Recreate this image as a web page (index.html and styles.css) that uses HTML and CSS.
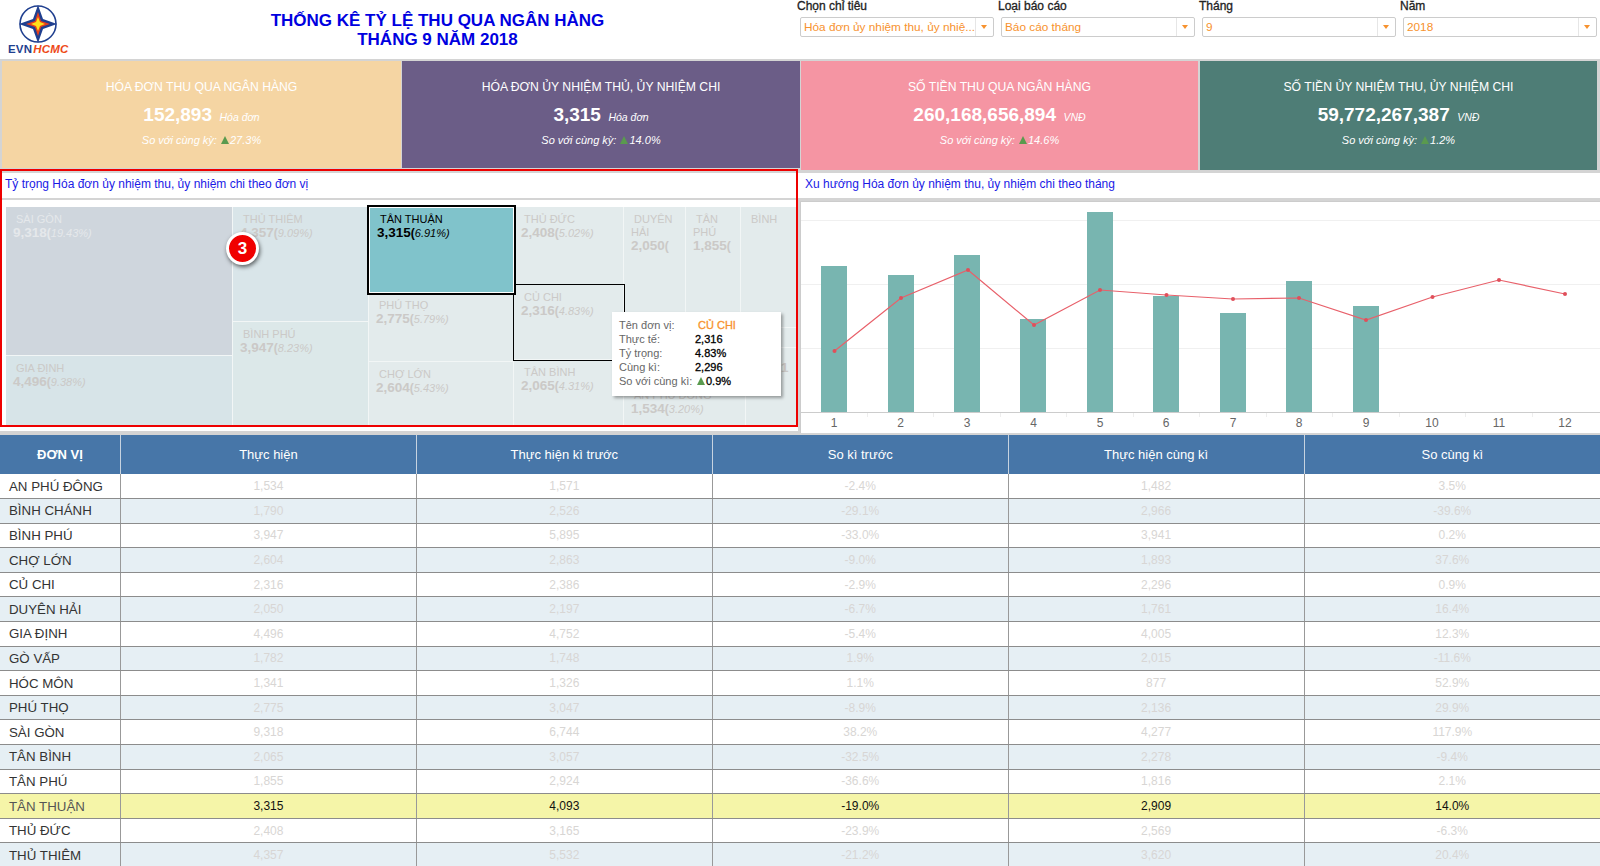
FILE: index.html
```html
<!DOCTYPE html>
<html lang="en">
<head>
  <meta charset="UTF-8">
  <title>Thống kê tỷ lệ thu qua ngân hàng</title>
  <link rel="stylesheet" href="styles.css">
</head>
<body>
  <header class="top">
    <div class="logo">
      <svg width="38" height="38" viewBox="0 0 38 38">
        <circle cx="19" cy="19" r="18" fill="white" stroke="#1f3f8f" stroke-width="1.6"/>
        <path d="M19 0 L24 14 L38 19 L24 24 L19 38 L14 24 L0 19 L14 14 Z" fill="#1f3f8f"/>
        <path d="M19 7 L22 16 L31 19 L22 22 L19 31 L16 22 L7 19 L16 16 Z" fill="#e8401c"/>
        <path d="M19 12 L21 17 L26 19 L21 21 L19 26 L17 21 L12 19 L17 17 Z" fill="#ffe21a"/>
      </svg>
      <div class="logo-text"><span class="evn">EVN</span><span class="hcmc">HCMC</span></div>
    </div>
    <div class="title">THỐNG KÊ TỶ LỆ THU QUA NGÂN HÀNG<br>THÁNG 9 NĂM 2018</div>
    <div class="filters">
      <div class="filter"><label>Chọn chỉ tiêu</label><div class="select"><span>Hóa đơn ủy nhiệm thu, ủy nhiệ...</span><i></i></div></div>
      <div class="filter"><label>Loại báo cáo</label><div class="select"><span>Báo cáo tháng</span><i></i></div></div>
      <div class="filter"><label>Tháng</label><div class="select"><span>9</span><i></i></div></div>
      <div class="filter"><label>Năm</label><div class="select"><span>2018</span><i></i></div></div>
    </div>
  </header>

  <section class="kpis">
    <div class="kpi kpi-sand">
      <div class="kpi-name">HÓA ĐƠN THU QUA NGÂN HÀNG</div>
      <div class="kpi-value"><b>152,893</b> <em>Hóa đơn</em></div>
      <div class="kpi-cmp">So với cùng kỳ: <span class="up"></span>27.3%</div>
    </div>
    <div class="kpi kpi-purple">
      <div class="kpi-name">HÓA ĐƠN ỦY NHIỆM THỦ, ỦY NHIỆM CHI</div>
      <div class="kpi-value"><b>3,315</b> <em>Hóa đơn</em></div>
      <div class="kpi-cmp">So với cùng kỳ: <span class="up"></span>14.0%</div>
    </div>
    <div class="kpi kpi-pink">
      <div class="kpi-name">SỐ TIỀN THU QUA NGÂN HÀNG</div>
      <div class="kpi-value"><b>260,168,656,894</b> <em>VNĐ</em></div>
      <div class="kpi-cmp">So với cùng kỳ: <span class="up"></span>14.6%</div>
    </div>
    <div class="kpi kpi-green">
      <div class="kpi-name">SỐ TIỀN ỦY NHIỆM THU, ỦY NHIỆM CHI</div>
      <div class="kpi-value"><b>59,772,267,387</b> <em>VNĐ</em></div>
      <div class="kpi-cmp">So với cùng kỳ: <span class="up"></span>1.2%</div>
    </div>
  </section>

  <section class="charts">
    <div class="panel panel-left">
      <div class="panel-title">Tỷ trọng Hóa đơn ủy nhiệm thu, ủy nhiệm chi theo đơn vị</div>
      <div class="treemap">
        <div class="tm-col tm-a">
          <div class="cell c-saigon"><p>SÀI GÒN</p><b>9,318</b><u>(</u><em>19.43%)</em></div>
          <div class="cell c-giadinh"><p>GIA ĐỊNH</p><b>4,496</b><u>(</u><em>9.38%)</em></div>
        </div>
        <div class="tm-col tm-b">
          <div class="cell c-thuthiem"><p>THỦ THIÊM</p><b>4,357</b><u>(</u><em>9.09%)</em></div>
          <div class="cell c-binhphu"><p>BÌNH PHÚ</p><b>3,947</b><u>(</u><em>8.23%)</em></div>
        </div>
        <div class="tm-col tm-c">
          <div class="cell c-tanthuan"><p>TÂN THUẬN</p><b>3,315</b><u>(</u><em>6.91%)</em></div>
          <div class="cell c-phutho"><p>PHÚ THỌ</p><b>2,775</b><u>(</u><em>5.79%)</em></div>
          <div class="cell c-cholon"><p>CHỢ LỚN</p><b>2,604</b><u>(</u><em>5.43%)</em></div>
        </div>
        <div class="tm-col tm-d">
          <div class="cell c-thuduc"><p>THỦ ĐỨC</p><b>2,408</b><u>(</u><em>5.02%)</em></div>
          <div class="cell c-cuchi"><p>CỦ CHI</p><b>2,316</b><u>(</u><em>4.83%)</em></div>
          <div class="cell c-tanbinh"><p>TÂN BÌNH</p><b>2,065</b><u>(</u><em>4.31%)</em></div>
        </div>
        <div class="tm-col tm-e">
          <div class="tm-row tm-top">
            <div class="cell c-duyenhai"><p>DUYÊN HẢI</p><b>2,050</b><u>(</u></div>
            <div class="cell c-tanphu"><p>TÂN PHÚ</p><b>1,855</b><u>(</u></div>
            <div class="tm-col tm-f">
              <div class="cell c-binh"><p>BÌNH</p></div>
              <div class="cell c-binh2"></div>
            </div>
          </div>
          <div class="tm-row tm-bottom">
            <div class="tm-col tm-g">
              <div class="cell c-blank"></div>
              <div class="cell c-anphu"><p>AN PHÚ ĐÔNG</p><b>1,534</b><u>(</u><em>3.20%)</em></div>
            </div>
            <div class="cell c-last"><b>1</b></div>
          </div>
        </div>
      </div>
      <div class="badge">3</div>
      <div class="red-frame"></div>
      <div class="tooltip">
        <div class="tip-row"><span>Tên đơn vị:</span><b class="tip-name">CỦ CHI</b></div>
        <div class="tip-row"><span>Thực tế:</span><b>2,316</b></div>
        <div class="tip-row"><span>Tỷ trọng:</span><b>4.83%</b></div>
        <div class="tip-row"><span>Cùng kì:</span><b>2,296</b></div>
        <div class="tip-row tip-last"><span>So với cùng kì:</span><b><i class="up"></i>0.9%</b></div>
      </div>
    </div>
    <div class="panel panel-right">
      <div class="panel-title">Xu hướng Hóa đơn ủy nhiệm thu, ủy nhiệm chi theo tháng</div>
      <div class="chart">
        <svg width="799" height="231" viewBox="801 202 799 231">
          <g stroke="#f0f0f0" stroke-width="1">
            <line x1="801" y1="220.5" x2="1600" y2="220.5"/>
            <line x1="801" y1="284.5" x2="1600" y2="284.5"/>
            <line x1="801" y1="348.5" x2="1600" y2="348.5"/>
          </g>
          <g fill="#78b5b0">
            <rect x="821" y="266" width="26" height="146"/>
            <rect x="888" y="275" width="26" height="137"/>
            <rect x="954" y="255" width="26" height="157"/>
            <rect x="1020" y="319" width="26" height="93"/>
            <rect x="1087" y="212" width="26" height="200"/>
            <rect x="1153" y="296" width="26" height="116"/>
            <rect x="1220" y="313" width="26" height="99"/>
            <rect x="1286" y="281" width="26" height="131"/>
            <rect x="1353" y="306" width="26" height="106"/>
          </g>
          <line x1="801" y1="412.5" x2="1600" y2="412.5" stroke="#ccc"/>
          <g stroke="#eee">
            <line x1="867.5" y1="413" x2="867.5" y2="417"/>
            <line x1="933.5" y1="413" x2="933.5" y2="417"/>
            <line x1="1000.5" y1="413" x2="1000.5" y2="417"/>
            <line x1="1066.5" y1="413" x2="1066.5" y2="417"/>
            <line x1="1133.5" y1="413" x2="1133.5" y2="417"/>
            <line x1="1199.5" y1="413" x2="1199.5" y2="417"/>
            <line x1="1266.5" y1="413" x2="1266.5" y2="417"/>
            <line x1="1332.5" y1="413" x2="1332.5" y2="417"/>
            <line x1="1399.5" y1="413" x2="1399.5" y2="417"/>
            <line x1="1465.5" y1="413" x2="1465.5" y2="417"/>
            <line x1="1532.5" y1="413" x2="1532.5" y2="417"/>
          </g>
          <polyline fill="none" stroke="#e8606a" stroke-width="1.2" points="834.5,351 901,298 968,270 1034,325 1100,290 1166.5,295 1233,299 1299,298 1366,320 1432.5,297 1499,280 1565,294"/>
          <g fill="#e04f5a">
            <circle cx="834.5" cy="351" r="2"/><circle cx="901" cy="298" r="2"/><circle cx="968" cy="270" r="2"/><circle cx="1034" cy="325" r="2"/>
            <circle cx="1100" cy="290" r="2"/><circle cx="1166.5" cy="295" r="2"/><circle cx="1233" cy="299" r="2"/><circle cx="1299" cy="298" r="2"/>
            <circle cx="1366" cy="320" r="2"/><circle cx="1432.5" cy="297" r="2"/><circle cx="1499" cy="280" r="2"/><circle cx="1565" cy="294" r="2"/>
          </g>
          <g class="axis" text-anchor="middle">
            <text x="834" y="427">1</text><text x="900.5" y="427">2</text><text x="967" y="427">3</text><text x="1033.5" y="427">4</text>
            <text x="1100" y="427">5</text><text x="1166" y="427">6</text><text x="1233" y="427">7</text><text x="1299" y="427">8</text>
            <text x="1366" y="427">9</text><text x="1432" y="427">10</text><text x="1499" y="427">11</text><text x="1565" y="427">12</text>
          </g>
        </svg>
      </div>
    </div>
  </section>

  <table class="grid">
    <thead>
      <tr><th class="col-unit">ĐƠN VỊ</th><th>Thực hiện</th><th>Thực hiện kì trước</th><th>So kì trước</th><th>Thực hiện cùng kì</th><th>So cùng kì</th></tr>
    </thead>
    <tbody>
      <tr><td>AN PHÚ ĐÔNG</td><td>1,534</td><td>1,571</td><td>-2.4%</td><td>1,482</td><td>3.5%</td></tr>
      <tr><td>BÌNH CHÁNH</td><td>1,790</td><td>2,526</td><td>-29.1%</td><td>2,966</td><td>-39.6%</td></tr>
      <tr><td>BÌNH PHÚ</td><td>3,947</td><td>5,895</td><td>-33.0%</td><td>3,941</td><td>0.2%</td></tr>
      <tr><td>CHỢ LỚN</td><td>2,604</td><td>2,863</td><td>-9.0%</td><td>1,893</td><td>37.6%</td></tr>
      <tr><td>CỦ CHI</td><td>2,316</td><td>2,386</td><td>-2.9%</td><td>2,296</td><td>0.9%</td></tr>
      <tr><td>DUYÊN HẢI</td><td>2,050</td><td>2,197</td><td>-6.7%</td><td>1,761</td><td>16.4%</td></tr>
      <tr><td>GIA ĐỊNH</td><td>4,496</td><td>4,752</td><td>-5.4%</td><td>4,005</td><td>12.3%</td></tr>
      <tr><td>GÒ VẤP</td><td>1,782</td><td>1,748</td><td>1.9%</td><td>2,015</td><td>-11.6%</td></tr>
      <tr><td>HÓC MÔN</td><td>1,341</td><td>1,326</td><td>1.1%</td><td>877</td><td>52.9%</td></tr>
      <tr><td>PHÚ THỌ</td><td>2,775</td><td>3,047</td><td>-8.9%</td><td>2,136</td><td>29.9%</td></tr>
      <tr><td>SÀI GÒN</td><td>9,318</td><td>6,744</td><td>38.2%</td><td>4,277</td><td>117.9%</td></tr>
      <tr><td>TÂN BÌNH</td><td>2,065</td><td>3,057</td><td>-32.5%</td><td>2,278</td><td>-9.4%</td></tr>
      <tr><td>TÂN PHÚ</td><td>1,855</td><td>2,924</td><td>-36.6%</td><td>1,816</td><td>2.1%</td></tr>
      <tr class="active"><td>TÂN THUẬN</td><td>3,315</td><td>4,093</td><td>-19.0%</td><td>2,909</td><td>14.0%</td></tr>
      <tr><td>THỦ ĐỨC</td><td>2,408</td><td>3,165</td><td>-23.9%</td><td>2,569</td><td>-6.3%</td></tr>
      <tr><td>THỦ THIÊM</td><td>4,357</td><td>5,532</td><td>-21.2%</td><td>3,620</td><td>20.4%</td></tr>
    </tbody>
  </table>
</body>
</html>
```

FILE: styles.css
```css
html, body {
  margin: 0;
  padding: 0;
  height: 866px;
  overflow: hidden;
}
body {
  font-family: "Liberation Sans", Arial, sans-serif;
  background-color: #d4d4d4;
  color: #333;
}

/* top bar */
.top {
  display: flex;
  height: 59px;
  background-color: white;
  border-bottom: 2px solid #d4d4d4;
}
.logo {
  width: 80px;
  padding: 5px 0 0 8px;
  box-sizing: border-box;
}
.logo svg {
  display: block;
  margin-left: 11px;
}
.logo-text {
  font-size: 11.5px;
  font-weight: bold;
  line-height: 13px;
  letter-spacing: 0.2px;
  white-space: nowrap;
}
.evn {
  color: #1f3f8f;
}
.hcmc {
  margin-left: 1px;
  color: #ee4a18;
  font-style: italic;
}
.title {
  width: 714px;
  padding: 11px 0 0 1px;
  box-sizing: border-box;
  font-size: 17px;
  font-weight: bold;
  line-height: 19px;
  color: #0000e0;
  text-align: center;
}
.filters {
  display: flex;
  width: 806px;
}
.filter {
  width: 201px;
}
.filter label {
  display: block;
  padding-left: 3px;
  font-size: 12px;
  line-height: 12px;
  color: #222;
  -webkit-text-stroke: 0.3px #222;
}
.select {
  display: flex;
  align-items: center;
  width: 194px;
  height: 20px;
  margin: 5px 0 0 6px;
  border: 1px solid #ccc;
  border-radius: 2px;
  box-sizing: border-box;
}
.select span {
  flex: 1;
  padding-left: 3px;
  font-size: 11.8px;
  color: #f7922e;
  white-space: nowrap;
  overflow: hidden;
}
.select i {
  position: relative;
  width: 17px;
  height: 18px;
  border-left: 1px solid #e6e6e6;
}
.select i::after {
  content: "";
  position: absolute;
  left: 5px;
  top: 7px;
  border-left: 3.5px solid transparent;
  border-right: 3.5px solid transparent;
  border-top: 4px solid #f7922e;
}

/* kpi cards */
.kpis {
  display: flex;
  height: 109px;
  gap: 1px;
  padding-left: 2px;
}
.kpi {
  padding-top: 18px;
  box-sizing: border-box;
  color: white;
  text-align: center;
}
.kpi-sand {
  width: 399px;
  height: 107px;
  background-color: #f5d5a3;
}
.kpi-purple {
  width: 398px;
  height: 107px;
  background-color: #6b5d87;
}
.kpi-pink {
  width: 397px;
  margin-right: 1px;
  background-color: #f595a3;
}
.kpi-green {
  width: 397px;
  background-color: #4e7d76;
}
.kpi-name {
  font-size: 12.2px;
  line-height: 16px;
}
.kpi-value {
  margin-top: 8px;
  line-height: 24px;
}
.kpi-value b {
  font-size: 19px;
}
.kpi-value em {
  margin-left: 3px;
  font-size: 10.5px;
}
.kpi-cmp {
  margin-top: 3px;
  font-size: 11px;
  font-style: italic;
  line-height: 16px;
}
.up {
  display: inline-block;
  width: 0;
  height: 0;
  margin: 0 1px;
  border-left: 4px solid transparent;
  border-right: 4px solid transparent;
  border-bottom: 8px solid #5a9a4e;
}

/* chart panels */
.charts {
  display: flex;
  height: 265px;
}
.panel {
  position: relative;
  width: 800px;
  box-sizing: border-box;
}
.panel-title {
  height: 25px;
  margin-top: 3px;
  padding-left: 5px;
  background-color: white;
  font-size: 12px;
  line-height: 23px;
  color: #1a1ae6;
}
.treemap {
  display: flex;
  width: 798px;
  height: 231px;
  margin-top: 2px;
  padding: 7px 0 0 6px;
  background-color: white;
  box-sizing: border-box;
}
.tm-col {
  display: flex;
  flex-direction: column;
  height: 220px;
}
.tm-a { width: 227px; }
.tm-b { width: 136px; }
.tm-c { width: 145px; }
.tm-d { width: 110px; }
.tm-e { width: 173px; }
.tm-f { width: 56px; height: 141px; }
.tm-g { width: 122px; height: 79px; }
.tm-row {
  display: flex;
}
.tm-top { height: 141px; }
.tm-bottom { height: 79px; }
.cell {
  position: relative;
  box-sizing: border-box;
  padding: 6px 0 0 7px;
  overflow: hidden;
  background-color: #e3ebec;
  border-right: 1px solid #f2f6f6;
  border-bottom: 1px solid #f2f6f6;
  color: #cbc9c7;
  font-size: 12px;
  line-height: 14px;
}
.cell p {
  margin: 0;
  font-size: 11px;
  line-height: 13px;
  text-indent: 3px;
}
.cell p::first-line {
  word-spacing: 0;
}
.cell b {
  font-size: 13.5px;
}
.cell u {
  font-size: 12px;
  font-weight: bold;
  text-decoration: none;
}
.cell em {
  font-size: 11px;
}
.c-saigon { height: 149px; background-color: #cfd6dd; color: #e5e8eb; }
.c-giadinh { height: 71px; background-color: #d7e4e8; }
.c-thuthiem { height: 115px; background-color: #d9e5e9; }
.c-binhphu { height: 105px; background-color: #dce8e9; }
.c-tanthuan {
  height: 86px;
  padding: 5px 0 0 7px;
  overflow: visible;
  background-color: #80c3cb;
  border: 1px solid white;
  outline: 2px solid #000;
  color: #000;
  z-index: 2;
}
.c-phutho { height: 69px; }
.c-cholon { height: 65px; }
.c-thuduc { height: 78px; }
.c-cuchi { height: 75px; overflow: visible; outline: 1px solid #000; z-index: 1; }
.c-tanbinh { height: 67px; }
.c-duyenhai { width: 62px; }
.c-tanphu { width: 55px; }
.c-binh { height: 121px; }
.c-binh2 { height: 20px; }
.c-blank { height: 35px; }
.c-anphu { height: 44px; white-space: nowrap; }
.c-last { width: 51px; padding: 13px 0 0 35px; }

.badge {
  position: absolute;
  left: 226px;
  top: 62px;
  width: 27px;
  height: 27px;
  border: 3px solid white;
  border-radius: 50%;
  background-color: #f00000;
  box-shadow: 1px 2px 4px rgba(0, 0, 0, 0.6);
  color: white;
  font-size: 17px;
  font-weight: bold;
  line-height: 27px;
  text-align: center;
  z-index: 4;
}
.red-frame {
  position: absolute;
  left: 0;
  top: -1px;
  width: 798px;
  height: 258px;
  border: 2px solid #ee0000;
  box-sizing: border-box;
  pointer-events: none;
  z-index: 5;
}
.tooltip {
  position: absolute;
  left: 612px;
  top: 142px;
  width: 169px;
  height: 84px;
  padding: 6px 0 0 7px;
  box-sizing: border-box;
  background-color: white;
  box-shadow: 2px 2px 3px rgba(0, 0, 0, 0.35);
  font-size: 11px;
  line-height: 14px;
  color: #666;
  z-index: 4;
}
.tip-row {
  display: flex;
}
.tip-row span {
  width: 76px;
}
.tip-row b {
  color: #000;
  font-weight: normal;
  -webkit-text-stroke: 0.3px #000;
}
.tip-row .tip-name {
  margin-left: 3px;
  color: #f7922e;
  -webkit-text-stroke: 0.3px #f7922e;
}
.tip-last span {
  width: 77px;
}
.chart {
  height: 232px;
  margin-top: 3px;
  box-sizing: border-box;
  background-color: white;
  border-top: 1px solid #ccc;
  border-left: 1px solid #ccc;
}
.chart svg {
  display: block;
}
.axis {
  font-size: 12px;
  fill: #666;
}

/* table */
.grid {
  width: 1600px;
  border-collapse: collapse;
  table-layout: fixed;
  font-size: 12px;
  background-color: white;
}
.grid th {
  height: 39px;
  padding: 0;
  background-color: #4776a8;
  color: white;
  font-weight: normal;
  font-size: 13px;
  border-left: 1px solid #c7d3e0;
}
.grid th:first-child {
  border-left: 0;
  font-weight: bold;
}
.col-unit {
  width: 120px;
}
.grid td {
  height: 24.6px;
  padding: 0;
  box-sizing: border-box;
  border-left: 1px solid #999;
  border-bottom: 1px solid #8c8c8c;
  text-align: center;
  color: #d8d6d4;
}
.grid td:first-child {
  border-left: 0;
  padding-left: 9px;
  text-align: left;
  font-size: 13.3px;
  color: #333;
}
.grid tbody tr:nth-child(even) td {
  background-color: #e6eff4;
}
.grid tbody tr.active td {
  background-color: #f5f5a8;
  color: #111;
}
.grid tbody tr.active td:first-child {
  color: #555;
}
```
